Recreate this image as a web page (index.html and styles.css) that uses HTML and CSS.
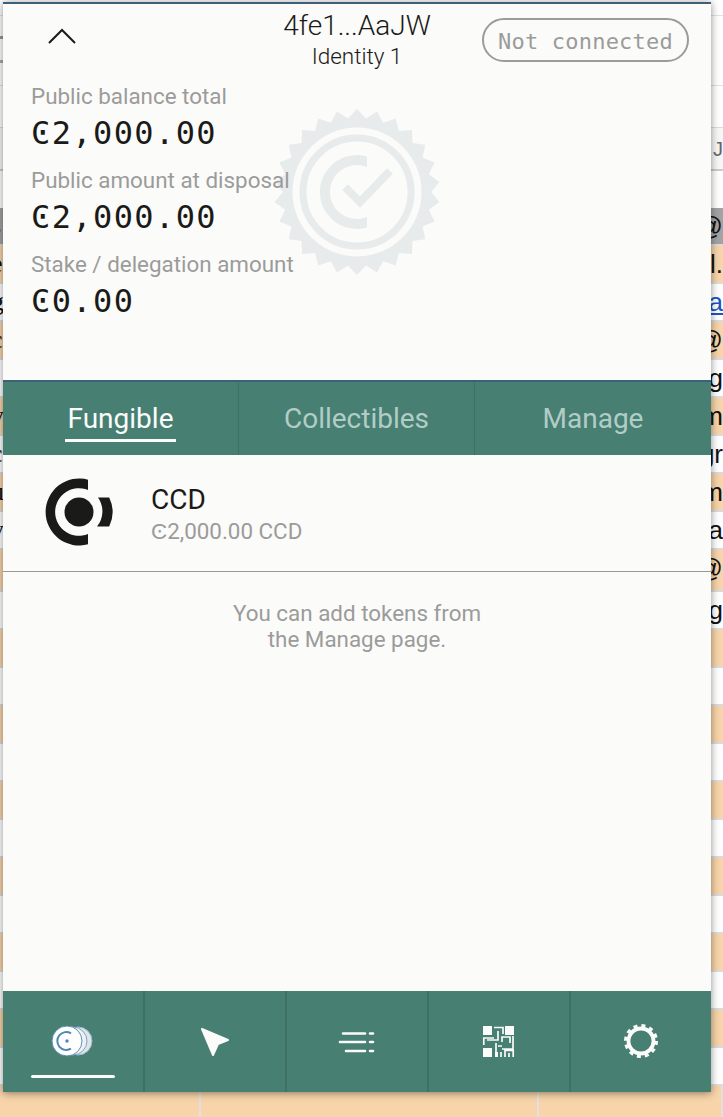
FILE: index.html
```html
<!DOCTYPE html>
<html lang="en">
<head>
<meta charset="utf-8">
<title>Wallet</title>
<link rel="stylesheet" href="styles.css">
</head>
<body>
<div class="backdrop">
  <div class="bg-head"><div class="bg-lines"><div class="bg-strip"></div></div></div>
  <div class="bg-search"><span>J</span></div>
  <div class="bg-gap"></div>
  <div class="row gray"><span class="l">s</span><span></span><span class="r">@</span></div>
  <div class="row orange"><span class="l">e</span><span></span><span class="r">l.</span></div>
  <div class="row"><span class="l">g</span><span></span><span class="r"><a class="link">na</a></span></div>
  <div class="row orange"><span class="l">c</span><span></span><span class="r">3@</span></div>
  <div class="row"><span class="l">r</span><span></span><span class="r">g</span></div>
  <div class="row orange"><span class="l">y</span><span></span><span class="r">m</span></div>
  <div class="row"><span class="l">c</span><span></span><span class="r">gr</span></div>
  <div class="row orange"><span class="l">u</span><span></span><span class="r">m</span></div>
  <div class="row"><span class="l">y</span><span></span><span class="r">na</span></div>
  <div class="row orange tall"><span class="l">t</span><span></span><span class="r">@</span></div>
  <div class="row"><span></span><span></span><span class="r">g</span></div>
  <div class="row orange"><span></span><span></span><span></span></div>
  <div class="row"><span></span><span></span><span></span></div>
  <div class="row orange"><span></span><span></span><span></span></div>
  <div class="row"><span></span><span></span><span></span></div>
  <div class="row orange"><span></span><span></span><span></span></div>
  <div class="row"><span></span><span></span><span></span></div>
  <div class="row orange"><span></span><span></span><span></span></div>
  <div class="row"><span></span><span></span><span></span></div>
  <div class="row orange"><span></span><span></span><span></span></div>
  <div class="row"><span></span><span></span><span></span></div>
  <div class="row orange"><span></span><span></span><span></span></div>
  <div class="row"><span></span><span></span><span></span></div>
  <div class="row orange last"><span></span><span></span><span></span></div>
</div>

<main class="panel">
  <section class="account">
    <header class="head">
      <button class="chevron" aria-label="Collapse">
        <svg width="30" height="18" viewBox="0 0 30 18"><path d="M2 15 15 2l13 13" fill="none" stroke="#1a1a18" stroke-width="2"/></svg>
      </button>
      <div class="who">
        <div class="addr">4fe1...AaJW</div>
        <div class="ident">Identity 1</div>
      </div>
      <div class="pill-wrap"><div class="pill">Not connected</div></div>
    </header>
    <div class="balances">
      <svg class="seal" width="180" height="180" viewBox="-90 -90 180 180">
        <polygon fill="#e8ebec" points="0,-83 8.9,-73.5 19.9,-80.6 26.2,-69.2 38.6,-73.5 42,-60.9 55,-62.1 55.4,-49.1 68.3,-47.2 65.5,-34.4 77.6,-29.4 71.8,-17.7 82.4,-10 74,0 82.4,10 71.8,17.7 77.6,29.4 65.5,34.4 68.3,47.2 55.4,49.1 55,62.1 42,60.9 38.6,73.5 26.2,69.2 19.9,80.6 8.9,73.5 0,83 -8.9,73.5 -19.9,80.6 -26.2,69.2 -38.6,73.5 -42,60.9 -55,62.1 -55.4,49.1 -68.3,47.2 -65.5,34.4 -77.6,29.4 -71.8,17.7 -82.4,10 -74,0 -82.4,-10 -71.8,-17.7 -77.6,-29.4 -65.5,-34.4 -68.3,-47.2 -55.4,-49.1 -55,-62.1 -42,-60.9 -38.6,-73.5 -26.2,-69.2 -19.9,-80.6 -8.9,-73.5"/>
        <circle r="64.5" fill="#fbfbf9"/>
        <circle r="54" fill="none" stroke="#e8ebec" stroke-width="7"/>
        <path fill="#e8ebec" d="M10-35.6A37 37 0 1 0 10 35.6V25.1A27 27 0 1 1 10-25.1Z"/>
        <path fill="none" stroke="#e8ebec" stroke-width="8" d="M-12-5 3 10 33-21"/>
      </svg>
      <div class="bal">
        <div class="bal-label">Public balance total</div>
        <div class="bal-value">Ͼ2,000.00</div>
      </div>
      <div class="bal">
        <div class="bal-label">Public amount at disposal</div>
        <div class="bal-value">Ͼ2,000.00</div>
      </div>
      <div class="bal">
        <div class="bal-label">Stake / delegation amount</div>
        <div class="bal-value">Ͼ0.00</div>
      </div>
    </div>
  </section>

  <nav class="tabs">
    <div class="tab active"><span>Fungible</span></div>
    <div class="tab"><span>Collectibles</span></div>
    <div class="tab"><span>Manage</span></div>
  </nav>

  <section class="tokens">
    <div class="token">
      <svg class="token-logo" width="68" height="68" viewBox="-34 -34 68 68">
        <path fill="#1a1a18" d="M9-32.3A33.5 33.5 0 1 0 9 32.3V22A23.8 23.8 0 1 1 9-22Z"/>
        <circle r="14.5" fill="#1a1a18"/>
        <path fill="#1a1a18" d="M19-14.5H30.2A33.5 33.5 0 0 1 30.2 14.5H18A24 24 0 0 0 19-14.5Z"/>
      </svg>
      <div class="token-text">
        <div class="token-name">CCD</div>
        <div class="token-amount">Ͼ2,000.00 CCD</div>
      </div>
    </div>
    <p class="hint">You can add tokens from<br>the Manage page.</p>
  </section>

  <footer class="bar">
    <div class="bar-item current">
      <svg width="60" height="40" viewBox="0 0 60 40">
        <circle cx="35" cy="20" r="14" fill="#dfe5e8" stroke="#9db8cc" stroke-width="1"/>
        <circle cx="30" cy="20" r="14" fill="#eef1f2" stroke="#7ea4c4" stroke-width="1"/>
        <circle cx="24" cy="20" r="15" fill="#fff" stroke="#5b8fba" stroke-width="1"/>
        <path fill="none" stroke="#4f86b5" stroke-width="2" d="M28 12.3A9 9 0 1 0 28 27.7"/>
        <circle cx="24" cy="20" r="1.7" fill="#4f86b5"/>
      </svg>
      <div class="bar-line"></div>
    </div>
    <div class="bar-item">
      <svg width="40" height="40" viewBox="0 0 40 40"><path fill="#fbfbf9" stroke="#fbfbf9" stroke-width="2" stroke-linejoin="round" d="M7 8 33 19 23 23 18 34Z"/></svg>
    </div>
    <div class="bar-item">
      <svg width="40" height="40" viewBox="0 0 40 40"><path fill="none" stroke="#fbfbf9" stroke-width="2.6" stroke-linecap="round" d="M6 12.500H28M3 21H28M9 30H28M33 12.500H36M33 21H36M33 30H36"/></svg>
    </div>
    <div class="bar-item">
      <svg width="40" height="40" viewBox="0 0 40 40">
        <path fill="#fbfbf9" d="M4 5h9v9H4zM26 5h9v9H26zM4 27h9v9H4zM16 31h3v5h-3z"/>
        <path fill="none" stroke="#fbfbf9" stroke-width="1.7" d="M15 6.500H24V13M19 10V19H8M4.800 24V17H15M23 21V16H31V22M34 15V28H23M17 22V31M22 36V31M26 36V29.500H34.200V36M30 36V32M19 25H23"/>
      </svg>
    </div>
    <div class="bar-item">
      <svg width="40" height="40" viewBox="0 0 40 40">
        <circle cx="20" cy="20" r="12.500" fill="none" stroke="#fbfbf9" stroke-width="3.800"/>
        <circle cx="20" cy="20" r="15" fill="none" stroke="#fbfbf9" stroke-width="4" stroke-dasharray="3.900 3.950"/>
      </svg>
    </div>
  </footer>
</main>
</body>
</html>
```
FILE: styles.css
```css
* { box-sizing: border-box; }

html, body {
  margin: 0;
  height: 100%;
  overflow: hidden;
}

body {
  background: #fff;
  font-family: Roboto, "Liberation Sans", sans-serif;
  position: relative;
}

/* page behind the popup */
.backdrop { width: 723px; }

.bg-head {
  height: 128px;
  padding-top: 15px;
  border-bottom: 1px solid #ddd;
}

.bg-lines {
  height: 71px;
  padding-top: 20px;
  border-top: 1px solid #e2e2e2;
  border-bottom: 1px solid #e2e2e2;
}

.bg-strip {
  width: 20px;
  height: 27px;
  border-top: 3px solid #999;
  border-bottom: 3px solid #aaa;
}

.bg-search {
  height: 43px;
  background: #f7f7f7;
  border-bottom: 2px solid #ccc;
  text-align: right;
  font: 20px/42px "Liberation Sans", sans-serif;
  color: #666;
}

.bg-gap { height: 37px; }

.row {
  height: 38px;
  display: grid;
  grid-template-columns: 201px 338px 184px;
  border-bottom: 2px solid #dcdcdc;
  font: 26px/36px "Liberation Sans", sans-serif;
  color: #111;
  white-space: nowrap;
}

.row.orange { background: #f7d4a9; }
.row.gray { background: #a3a3a3; }
.row.tall { height: 42px; }

.row .l {
  font-family: "Liberation Serif", serif;
  text-indent: -9px;
}

.row .r { text-align: right; }

.row.last {
  height: 40px;
  border-bottom: 0;
}

.row.last span { border-right: 2px solid #e3e0de; }

.link {
  color: #1a55c4;
  text-decoration: underline;
}

/* popup */
.panel {
  position: absolute;
  left: 3px;
  top: 2px;
  width: 708px;
  height: 1090px;
  background: #fbfbf9;
  border-top: 2px solid #3f6079;
  display: flex;
  flex-direction: column;
  box-shadow: 0 1px 8px rgba(0, 0, 0, .45);
  color: #1a1a18;
}

.account { height: 376px; }

.head {
  height: 78px;
  display: grid;
  grid-template-columns: 1fr auto 1fr;
  padding-top: 7px;
}

.chevron {
  justify-self: start;
  align-self: start;
  margin: 17px 0 0 44px;
  padding: 0;
  border: 0;
  background: none;
  line-height: 0;
}

.who {
  text-align: center;
  white-space: nowrap;
}

.addr {
  font-size: 28px;
  line-height: 30px;
  font-weight: 300;
}

.ident {
  font-size: 22.500px;
  line-height: 30px;
  font-weight: 300;
}

.pill-wrap {
  display: flex;
  justify-content: flex-end;
  padding: 7px 22px 0 0;
  align-items: flex-start;
}

.pill {
  width: 207px;
  height: 44px;
  border: 2px solid #9b9b9b;
  border-radius: 22px;
  text-align: center;
  font: 22px/43px "DejaVu Sans Mono", monospace;
  color: #9b9b9b;
  letter-spacing: .2px;
}

.balances {
  position: relative;
  isolation: isolate;
  padding-left: 28px;
}

.seal {
  position: absolute;
  left: 264px;
  top: 20px;
  z-index: -1;
}

.bal { margin-bottom: 10px; }

.bal-label {
  font-size: 22.400px;
  line-height: 28px;
  color: #9b9b9b;
}

.bal-value {
  font: 32px/46px "DejaVu Sans Mono", monospace;
  letter-spacing: 1.400px;
  color: #1a1a18;
}

/* tabs */
.tabs {
  height: 75px;
  display: grid;
  grid-template-columns: 236px 236px 236px;
  background: #477f73;
  border-top: 2px solid #3f6079;
}

.tab {
  display: flex;
  align-items: center;
  justify-content: center;
  font-size: 28px;
  color: #b2cdc6;
  border-right: 1px solid #3f7163;
}

.tab:last-child { border-right: 0; }

.tab.active { color: #fbfbf9; }

.tab.active span {
  padding: 4px 3px;
  border-bottom: 3px solid #fbfbf9;
  margin-top: 3px;
}

/* token list */
.tokens { flex: 1; }

.token {
  height: 117px;
  display: flex;
  align-items: center;
  border-bottom: 1px solid #999;
  padding: 0 0 3px 42px;
}

.token-logo { flex: none; }

.token-text {
  margin: 6px 0 0 38px;
}

.token-name {
  font-size: 28px;
  line-height: 32px;
}

.token-amount {
  font-size: 22.400px;
  line-height: 30px;
  color: #9b9b9b;
}

.hint {
  margin: 28px 0 0;
  text-align: center;
  font-size: 22.400px;
  line-height: 26px;
  color: #9b9b9b;
}

/* bottom bar */
.bar {
  height: 101px;
  display: grid;
  grid-template-columns: 142px 142px 142px 142px 140px;
  background: #477f73;
}

.bar-item {
  display: flex;
  flex-direction: column;
  align-items: center;
  padding-top: 30px;
  border-right: 2px solid #3f7163;
}

.bar-item:last-child { border-right: 0; }

.bar-item svg { flex: none; }

.bar-line {
  width: 84px;
  height: 3px;
  margin-top: 14px;
  border-radius: 2px;
  background: #fbfbf9;
}
```
